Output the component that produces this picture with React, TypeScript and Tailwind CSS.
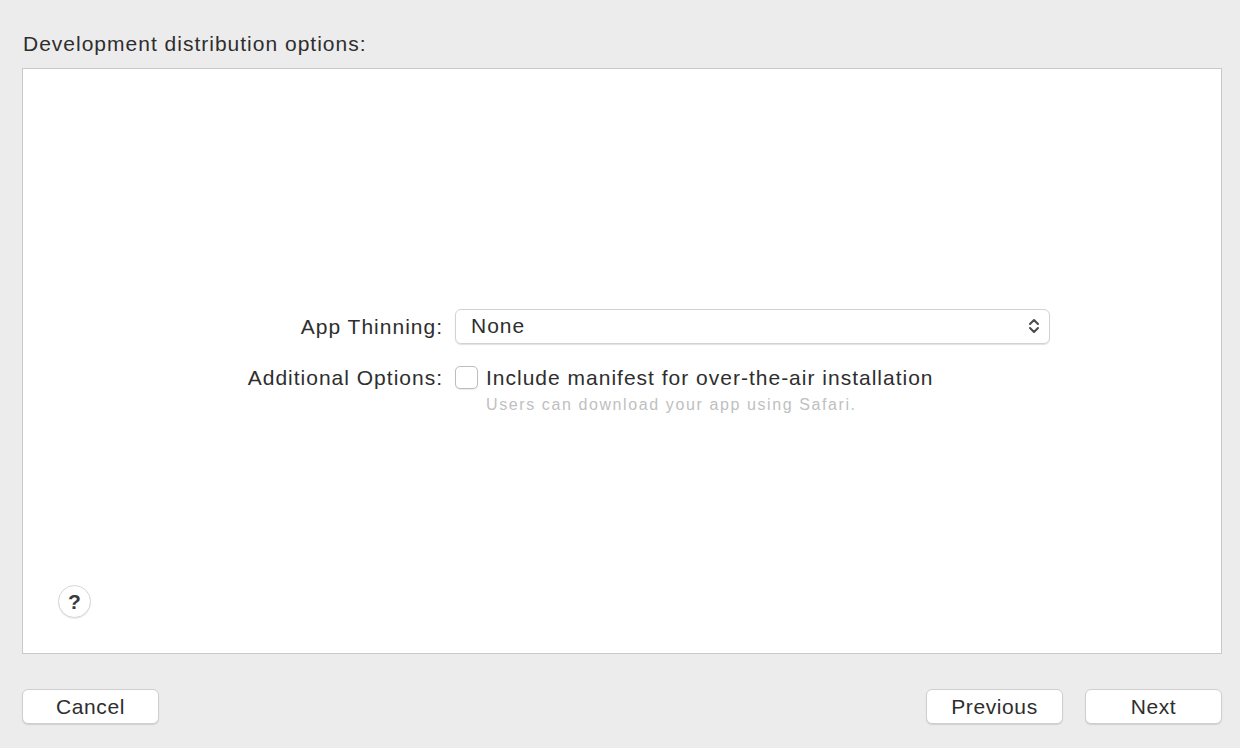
import React from "react";

const font = { fontFamily: '"Liberation Sans", Arial, sans-serif' };

const btn =
  "w-[137px] h-[35px] rounded-[6px] bg-white border border-[#cfcfcf] shadow-[0_1px_1px_rgba(0,0,0,0.12)] text-[21px] tracking-[0.6px] text-[#2e2e2e] leading-none";

export default function App() {
  return (
    <div
      className="w-[1240px] h-[748px] bg-[#ececec] flex flex-col pl-[22px] pr-[18px] pt-[28px] text-[#2e2e2e] overflow-hidden"
      style={font}
    >
      <div className="text-[21px] tracking-[1px] leading-[32px] pl-[1px] h-[40px]">Development distribution options:</div>
      <div className="h-[586px] bg-white border border-[#c9c9c9] flex flex-col">
        <div className="flex-1 flex flex-col justify-center pl-[221px] pt-[74px]">
          <div className="grid grid-cols-[199px_auto] gap-x-[12px] gap-y-[22px] items-start">
            <div className="text-[21px] tracking-[1px] text-right leading-[35px] whitespace-nowrap">App Thinning:</div>
            <div className="w-[595px] h-[35px] rounded-[6px] border border-[#d2d2d2] shadow-[0_1px_1px_rgba(0,0,0,0.12)] flex items-center justify-between pl-[15px] pr-[8px] text-[21px] tracking-[1px]">
              <span>None</span>
              <svg width="14" height="20" viewBox="0 0 14 20" fill="none" stroke="#4a4a4a" strokeWidth="2" strokeLinecap="round" strokeLinejoin="round">
                <path d="M3 8 L7 4 L11 8" />
                <path d="M3 12 L7 16 L11 12" />
              </svg>
            </div>
            <div className="text-[21px] tracking-[1px] text-right leading-[24px] whitespace-nowrap">Additional Options:</div>
            <div className="flex items-start gap-[8px]">
              <div className="w-[23px] h-[23px] rounded-[5px] border border-[#bdbdbd] bg-white shadow-[0_1px_1px_rgba(0,0,0,0.08)]" />
              <div className="flex flex-col">
                <div className="text-[21px] tracking-[1px] leading-[24px] whitespace-nowrap">Include manifest for over-the-air installation</div>
                <div className="text-[16px] tracking-[1.6px] leading-[30px] text-[#c0c0c0] whitespace-nowrap">Users can download your app using Safari.</div>
              </div>
            </div>
          </div>
        </div>
        <div className="pl-[35px] pb-[35px]">
          <div className="w-[33px] h-[33px] rounded-full border border-[#d6d6d6] bg-white shadow-[0_1px_1px_rgba(0,0,0,0.08)] flex items-center justify-center text-[21px] font-semibold text-[#3a3a3a]">?</div>
        </div>
      </div>
      <div className="flex items-center justify-between mt-[35px]">
        <button className={btn}>Cancel</button>
        <div className="flex gap-[22px]">
          <button className={btn}>Previous</button>
          <button className={btn}>Next</button>
        </div>
      </div>
    </div>
  );
}
